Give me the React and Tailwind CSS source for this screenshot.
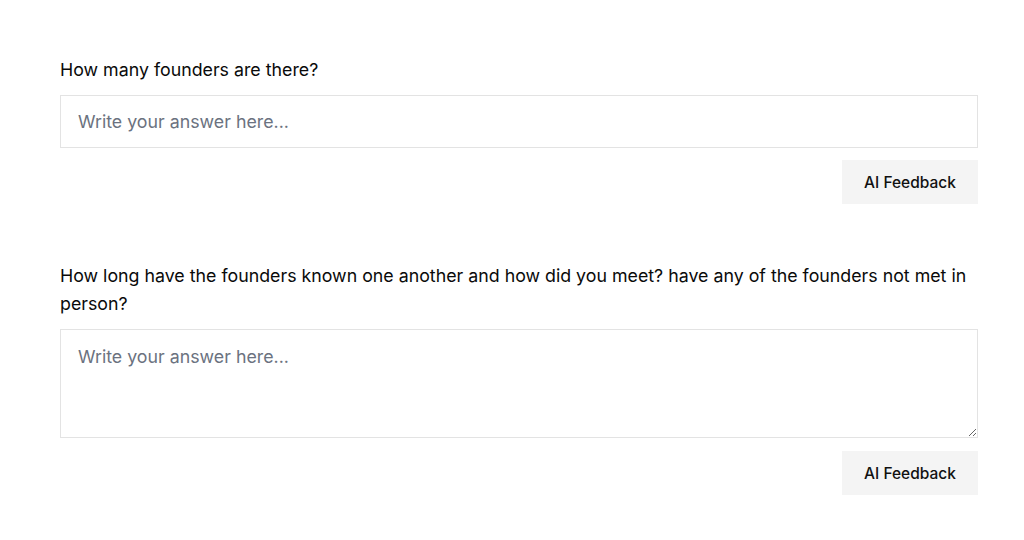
export default function App() {
  const questions = [
    { id: 1, text: "How many founders are there?", multiline: false },
    {
      id: 2,
      text: "How long have the founders known one another and how did you meet? have any of the founders not met in person?",
      multiline: true,
    },
  ];

  return (
    <div className="min-h-[540px] bg-white pl-[60px] pt-[56px] font-['Inter',sans-serif] text-[#111]">
      <div className="flex w-[918px] flex-col gap-[58px]">
        {questions.map((q) => (
          <div key={q.id} className="flex flex-col">
            <label className="text-[17.8px] leading-[28px] text-[#0a0a0a]">{q.text}</label>
            {q.multiline ? (
              <textarea
                rows={3}
                placeholder="Write your answer here..."
                className="mt-[11px] h-[109px] w-full border border-[#e3e3e3] px-[17px] py-[13px] text-[17.8px] leading-[28px] outline-none placeholder:text-[#6b7280]"
              />
            ) : (
              <input
                placeholder="Write your answer here..."
                className="mt-[11px] h-[53px] w-full border border-[#e3e3e3] px-[17px] text-[17.8px] outline-none placeholder:text-[#6b7280]"
              />
            )}
            <div className={q.multiline ? "mt-[13px] flex justify-end" : "mt-[12px] flex justify-end"}>
              <button className="h-[44px] w-[136px] bg-[#f4f4f4] pt-[2px] text-[15.5px] font-medium text-[#111]">
                AI Feedback
              </button>
            </div>
          </div>
        ))}
      </div>
    </div>
  );
}
